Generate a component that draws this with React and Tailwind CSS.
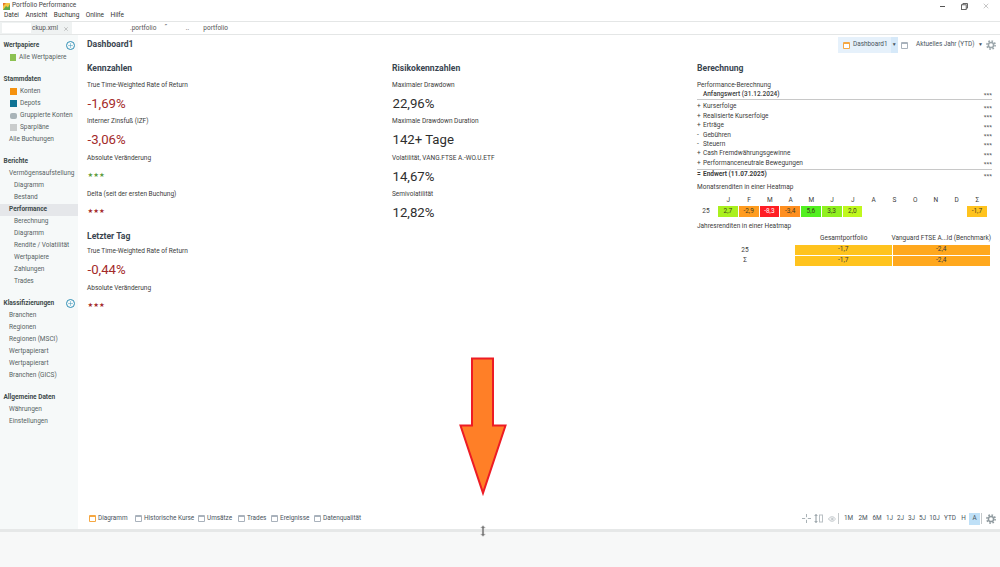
import React from "react";
import { Eye, Plus, X } from "lucide-react";

const FONT = "[font-family:Roboto,'Noto_Sans',sans-serif]";

function Gear({ className = "" }) {
  return (
    <svg width="10" height="10" viewBox="0 0 10 10" fill="none" stroke="currentColor" className={className}>
      <circle cx="5" cy="5" r="2.6" strokeWidth="1.5" />
      <circle cx="5" cy="5" r="4.1" strokeWidth="1.6" strokeDasharray="1.6 1.62" />
    </svg>
  );
}

function TabIcon({ active }) {
  return (
    <span
      className={
        active
          ? "block w-[7px] h-[7px] border border-[#f5a742] border-t-2 rounded-[1px] bg-white shrink-0"
          : "block w-[7px] h-[7px] border border-[#a9b2bc] border-t-2 rounded-[1px] bg-white shrink-0"
      }
    />
  );
}

function SideHead({ children, plus }) {
  return (
    <div className="h-[12px] pl-[3.5px] pr-[3px] flex items-center justify-between font-bold text-[#3d4a4a] text-[6.5px] whitespace-nowrap">
      <span>{children}</span>
      {plus && (
        <span className="w-[9px] h-[9px] rounded-full border border-[#2f8fb5] flex items-center justify-center text-[#2f8fb5]">
          <Plus size={7} strokeWidth={1.6} />
        </span>
      )}
    </div>
  );
}

function SideRow({ children, indent = 1, icon, active }) {
  const pad = indent === 2 ? "pl-[14px]" : icon ? "pl-[10px]" : "pl-[9px]";
  return (
    <div
      className={`h-[12px] flex items-center gap-[3px] text-[6.5px] ${pad} ${
        active ? "bg-[#e5e7ea] font-bold text-[#3d4a4a]" : "text-[#566363]"
      }`}
    >
      {icon}
      <span className="whitespace-nowrap">{children}</span>
    </div>
  );
}

function Sidebar() {
  return (
    <aside className="w-[78px] shrink-0 bg-[#f6f9f9] pt-[5px] flex flex-col gap-[10px]">
      <div>
        <SideHead plus>Wertpapiere</SideHead>
        <SideRow icon={<span className="block w-[6px] h-[7px] bg-[#8cc152]" />}>Alle Wertpapiere</SideRow>
      </div>
      <div>
        <SideHead>Stammdaten</SideHead>
        <SideRow icon={<span className="block w-[7px] h-[7px] bg-[#f5920f]" />}>Konten</SideRow>
        <SideRow icon={<span className="block w-[7px] h-[7px] bg-[#0f7394]" />}>Depots</SideRow>
        <SideRow icon={<span className="block w-[7px] h-[6px] rounded-[2px] bg-[#a9b4b8]" />}>Gruppierte Konten</SideRow>
        <SideRow icon={<span className="block w-[7px] h-[7px] bg-[#c9cccc]" />}>Sparpläne</SideRow>
        <SideRow>Alle Buchungen</SideRow>
      </div>
      <div>
        <SideHead>Berichte</SideHead>
        <SideRow>Vermögensaufstellung</SideRow>
        <SideRow indent={2}>Diagramm</SideRow>
        <SideRow indent={2}>Bestand</SideRow>
        <SideRow active>Performance</SideRow>
        <SideRow indent={2}>Berechnung</SideRow>
        <SideRow indent={2}>Diagramm</SideRow>
        <SideRow indent={2}>Rendite / Volatilität</SideRow>
        <SideRow indent={2}>Wertpapiere</SideRow>
        <SideRow indent={2}>Zahlungen</SideRow>
        <SideRow indent={2}>Trades</SideRow>
      </div>
      <div>
        <SideHead plus>Klassifizierungen</SideHead>
        <SideRow>Branchen</SideRow>
        <SideRow>Regionen</SideRow>
        <SideRow>Regionen (MSCI)</SideRow>
        <SideRow>Wertpapierart</SideRow>
        <SideRow>Wertpapierart</SideRow>
        <SideRow>Branchen (GICS)</SideRow>
      </div>
      <div>
        <SideHead>Allgemeine Daten</SideHead>
        <SideRow>Währungen</SideRow>
        <SideRow>Einstellungen</SideRow>
      </div>
    </aside>
  );
}

function Heading({ children }) {
  return <div className="h-[13px] flex items-center font-bold text-[8.6px] text-[#3a4550]">{children}</div>;
}

function Label({ children }) {
  return <div className="h-[12px] pt-[1px] flex items-center text-[6.5px] text-[#3b3b3b] whitespace-nowrap">{children}</div>;
}

function Value({ children, red }) {
  return (
    <div
      className={`h-[24.5px] pt-[1px] flex items-center text-[13.2px] pl-[0.5px] ${
        red ? "text-[#a32a2a]" : "text-[#2e2e2e]"
      }`}
    >
      {children}
    </div>
  );
}

function Stars({ green }) {
  return (
    <div
      className={`h-[24px] pb-[1px] flex items-center pl-[0.5px] [font-family:'DejaVu_Sans',sans-serif] text-[6.4px] ${
        green ? "text-[#5c9c3c]" : "text-[#a32a2a]"
      }`}
    >
      ★★★
    </div>
  );
}

function CalcRow({ sign, children, className = "" }) {
  return (
    <div className={`h-[9.45px] flex items-center justify-between text-[6.5px] text-[#3b3b3b] ${className}`}>
      <span className="flex whitespace-nowrap">
        <span className="w-[6px]">{sign}</span>
        {children}
      </span>
      <span className="text-[6px] font-bold text-[#555]">***</span>
    </div>
  );
}

const MONTHS = ["J", "F", "M", "A", "M", "J", "J", "A", "S", "O", "N", "D", "Σ"];
const CELLS = [
  ["2,7", "bg-[#aaf01e]"],
  ["-2,9", "bg-[#ff9c20]"],
  ["-8,3", "bg-[#ff1e24] text-white"],
  ["-3,4", "bg-[#ff8f20]"],
  ["5,6", "bg-[#52f020]"],
  ["3,3", "bg-[#90f020]"],
  ["2,0", "bg-[#c0f81e]"],
  null,
  null,
  null,
  null,
  null,
  ["-1,7", "bg-[#ffc31e]"],
];

function Heatmaps() {
  return (
    <div className="mt-[0.5px]">
      <div className="h-[14px] flex items-center text-[6.5px] text-[#3b3b3b]">Monatsrenditen in einer Heatmap</div>
      <div className="grid grid-cols-[21px_repeat(13,20.75px)] mt-[1px] text-[6.5px] text-[#3b3b3b]">
        <span className="h-[11px]" />
        {MONTHS.map((m, i) => (
          <span key={i} className="h-[11px] flex items-center justify-center">
            {m}
          </span>
        ))}
        <span className="h-[11px] flex items-center justify-center pr-[3px]">25</span>
        {CELLS.map((c, i) => (
          <span
            key={i}
            className={`h-[11px] flex items-center justify-center border-r border-white text-[#3d3d1e] ${c ? c[1] : ""}`}
          >
            {c ? c[0] : ""}
          </span>
        ))}
      </div>
      <div className="h-[12px] mt-[3px] flex items-center text-[6.5px] text-[#3b3b3b]">Jahresrenditen in einer Heatmap</div>
      <div className="grid grid-cols-[98px_97.5px_97.5px] text-[6.5px] text-[#3b3b3b]">
        <span className="h-[13px]" />
        <span className="h-[13px] flex items-center justify-center whitespace-nowrap">Gesamtportfolio</span>
        <span className="h-[13px] flex items-center justify-center whitespace-nowrap">Vanguard FTSE A...ld (Benchmark)</span>
        <span className="h-[10.5px] flex items-center justify-center pr-[2px]">25</span>
        <span className="h-[10.5px] flex items-center justify-center bg-[#ffc31e] border-r border-b border-white">-1,7</span>
        <span className="h-[10.5px] flex items-center justify-center bg-[#ffa81e] border-b border-white">-2,4</span>
        <span className="h-[10.5px] flex items-center justify-center pr-[2px]">Σ</span>
        <span className="h-[10.5px] flex items-center justify-center bg-[#ffc31e] border-r border-white">-1,7</span>
        <span className="h-[10.5px] flex items-center justify-center bg-[#ffa81e]">-2,4</span>
      </div>
    </div>
  );
}

function Crosshair() {
  return (
    <svg width="9" height="9" viewBox="0 0 9 9" fill="none" stroke="#a9b2b6" strokeWidth="1">
      <path d="M4.5 0v3.2M4.5 5.8V9M0 4.5h3.2M5.8 4.5H9" />
    </svg>
  );
}

function ScaleIcon() {
  return (
    <svg width="9" height="9" viewBox="0 0 9 9" fill="none" stroke="#8d989e" strokeWidth="1">
      <path d="M2 0.5v8M0.7 2L2 0.5 3.3 2M0.7 7L2 8.5 3.3 7" />
      <rect x="5.5" y="1" width="3" height="7" stroke="#b9c0c4" />
    </svg>
  );
}

function BottomBar() {
  const tabs = [
    ["Diagramm", true, "w-[46px]"],
    ["Historische Kurse", false, "w-[63px]"],
    ["Umsätze", false, "w-[40px]"],
    ["Trades", false, "w-[33px]"],
    ["Ereignisse", false, "w-[43px]"],
    ["Datenqualität", false, "w-[60px]"],
  ];
  const ranges = [
    ["1M", "w-[15px]"],
    ["2M", "w-[14px]"],
    ["6M", "w-[14px]"],
    ["1J", "w-[11px]"],
    ["2J", "w-[11px]"],
    ["3J", "w-[11px]"],
    ["5J", "w-[11px]"],
    ["10J", "w-[13px]"],
    ["YTD", "w-[18px]"],
    ["H", "w-[9px]"],
  ];
  return (
    <div className="h-[17px] mb-[2px] pl-[11px] pr-[4px] flex items-center justify-between text-[6.4px] text-[#48545c]">
      <div className="flex items-center">
        {tabs.map(([t, a, w]) => (
          <span key={t} className={`flex items-center gap-[2px] whitespace-nowrap ${w}`}>
            <TabIcon active={a} />
            {t}
          </span>
        ))}
      </div>
      <div className="flex items-center">
        <span className="w-[12px] flex justify-center"><Crosshair /></span>
        <span className="w-[13px] flex justify-center"><ScaleIcon /></span>
        <span className="w-[13px] flex justify-center text-[#aab2b6]"><Eye size={8} strokeWidth={2} /></span>
        <span className="w-px h-[11px] bg-[#c4c8ca] mr-[2px]" />
        {ranges.map(([r, w]) => (
          <span key={r} className={`flex justify-center ${w}`}>{r}</span>
        ))}
        <span className="w-[11px] h-[12px] bg-[#bfe0f7] flex items-center justify-center ml-[1px]">A</span>
        <span className="w-px h-[11px] bg-[#c4c8ca] ml-[1px] mr-[4px]" />
        <Gear className="text-[#8f9a9f]" />
      </div>
    </div>
  );
}

export default function App() {
  return (
    <div className={`relative w-[1000px] h-[567px] overflow-hidden bg-white flex flex-col ${FONT}`}>
      {/* Title bar */}
      <div className="h-[10px] mt-[1px] flex items-center justify-between pl-[3px] text-[6.5px] text-[#444]">
        <div className="flex items-center gap-[2px]">
          <svg width="7" height="7" viewBox="0 0 7 7">
            <rect width="7" height="7" fill="#f5c542" />
            <path d="M0 7L3 3l2 1.5L7 1v6z" fill="#5ea84a" />
            <path d="M0 0h3L0 3z" fill="#e8742a" />
          </svg>
          <span>Portfolio Performance</span>
        </div>
        <div className="flex items-center text-[#555]">
          <span className="w-[22px] flex justify-center"><span className="block w-[5px] h-px bg-[#555]" /></span>
          <span className="w-[22px] flex justify-center">
            <svg width="7" height="7" viewBox="0 0 7 7" fill="none" stroke="#555" strokeWidth="0.9">
              <rect x="0.5" y="1.8" width="4.7" height="4.7" />
              <path d="M1.9 1.8V.5h4.6v4.6H5.2" />
            </svg>
          </span>
          <span className="w-[22px] mr-[3px] flex justify-center"><X size={8} strokeWidth={1} /></span>
        </div>
      </div>
      {/* Menu */}
      <div className="h-[10px] flex items-center pl-[4px] gap-[6.5px] text-[6.5px] text-[#333]">
        <span>Datei</span>
        <span>Ansicht</span>
        <span>Buchung</span>
        <span>Online</span>
        <span>Hilfe</span>
      </div>
      {/* Tabs */}
      <div className="h-[13.5px] flex items-stretch border-y border-[#e4e6e6] text-[6.5px] text-[#555]">
        <div className="w-[72px] bg-[#eff2f2] pt-[2px] flex items-center pl-[2px]">
          <span className="block w-[29px] h-[10px] bg-white mr-[1px] -mt-[2px]" />
          <span className="w-[31px]">ckup.xml</span>
          <X size={6} strokeWidth={1.2} />
        </div>
        <div className="flex-1 pt-[3px] flex items-center pl-[58px]">
          <span>.portfolio</span>
          <span className="ml-[8px]">˝</span>
          <span className="ml-[19px]">..</span>
          <span className="ml-[14px]">portfolio</span>
        </div>
      </div>
      {/* Middle */}
      <div className="flex-1 min-h-0 flex">
        <Sidebar />
        <main className="flex-1 min-w-0 flex flex-col">
          <div className="h-[24.5px] pl-[9px] pr-[4px] flex items-start justify-between">
            <span className="font-bold text-[8.6px] text-[#3a4550] mt-[3px]">Dashboard1</span>
            <div className="flex items-center mt-[2.5px] text-[6.4px] text-[#48545c]">
              <div className="h-[16px] w-[60px] bg-[#e6f1fb] flex items-center pl-[5px] gap-[3px]">
                <TabIcon active />
                <span className="w-[35px] whitespace-nowrap">Dashboard1</span>
                <span className="h-full w-[10px] bg-[#d6e9f9] flex items-center justify-center text-[5px]">▼</span>
              </div>
              <span className="ml-[2.5px]"><TabIcon /></span>
              <span className="ml-[8.5px] w-[55px] whitespace-nowrap">Aktuelles Jahr (YTD)</span>
              <span className="ml-[7px] w-[4px] text-[5px]">▼</span>
              <Gear className="ml-[4px] text-[#9aa5aa]" />
            </div>
          </div>
          <div className="flex-1 min-h-0 pl-[9px] pt-[3px] grid grid-cols-[305px_305px_295px] content-start">
            <div>
              <Heading>Kennzahlen</Heading>
              <div className="mt-[4px]">
                <Label>True Time-Weighted Rate of Return</Label>
                <Value red>-1,69%</Value>
                <Label>Interner Zinsfuß (IZF)</Label>
                <Value red>-3,06%</Value>
                <Label>Absolute Veränderung</Label>
                <Stars green />
                <Label>Delta (seit der ersten Buchung)</Label>
                <Stars />
              </div>
              <div className="mt-[5.5px]">
                <Heading>Letzter Tag</Heading>
                <div className="mt-[3px]">
                  <Label>True Time-Weighted Rate of Return</Label>
                  <Value red>-0,44%</Value>
                  <Label>Absolute Veränderung</Label>
                  <Stars />
                </div>
              </div>
            </div>
            <div>
              <Heading>Risikokennzahlen</Heading>
              <div className="mt-[4px]">
                <Label>Maximaler Drawdown</Label>
                <Value>22,96%</Value>
                <Label>Maximale Drawdown Duration</Label>
                <Value>142+ Tage</Value>
                <Label>Volatilität, VANG.FTSE A.-WO.U.ETF</Label>
                <Value>14,67%</Value>
                <Label>Semivolatilität</Label>
                <Value>12,82%</Value>
              </div>
            </div>
            <div>
              <Heading>Berechnung</Heading>
              <div className="mt-[4px]">
                <Label>Performance-Berechnung</Label>
                <CalcRow className="font-medium border-b border-[#c8c8c8] pb-[1px] mb-[2px]">Anfangswert (31.12.2024)</CalcRow>
                <CalcRow sign="+">Kurserfolge</CalcRow>
                <CalcRow sign="+">Realisierte Kurserfolge</CalcRow>
                <CalcRow sign="+">Erträge</CalcRow>
                <CalcRow sign="-">Gebühren</CalcRow>
                <CalcRow sign="-">Steuern</CalcRow>
                <CalcRow sign="+">Cash Fremdwährungsgewinne</CalcRow>
                <CalcRow sign="+">Performanceneutrale Bewegungen</CalcRow>
                <div className="border-t border-[#c8c8c8] mt-[0.5px] pt-[0.5px]">
                  <CalcRow sign="=" className="font-bold">Endwert (11.07.2025)</CalcRow>
                </div>
              </div>
              <Heatmaps />
            </div>
          </div>
          <BottomBar />
        </main>
      </div>
      {/* Bottom pane */}
      <div className="h-[38px] shrink-0 border-t-[3px] border-[#e6e8e8] bg-[#f7f8f8]" />

      {/* Annotation arrow overlay */}
      <svg className="absolute left-[455px] top-[352px]" width="56" height="146" viewBox="0 0 56 146">
        <path d="M17 6.5h21v67h12.5L28 141 5.5 73.5H17z" fill="#ff7f27" stroke="#ed1c24" strokeWidth="2" />
      </svg>
      {/* Resize cursor overlay */}
      <svg className="absolute left-[479px] top-[525px]" width="8" height="12" viewBox="0 0 8 12" fill="#777" stroke="#ddd" strokeWidth="0.5">
        <path d="M4 0.5L6.5 3H5V9H6.5L4 11.5 1.5 9H3V3H1.5z" />
      </svg>
    </div>
  );
}
